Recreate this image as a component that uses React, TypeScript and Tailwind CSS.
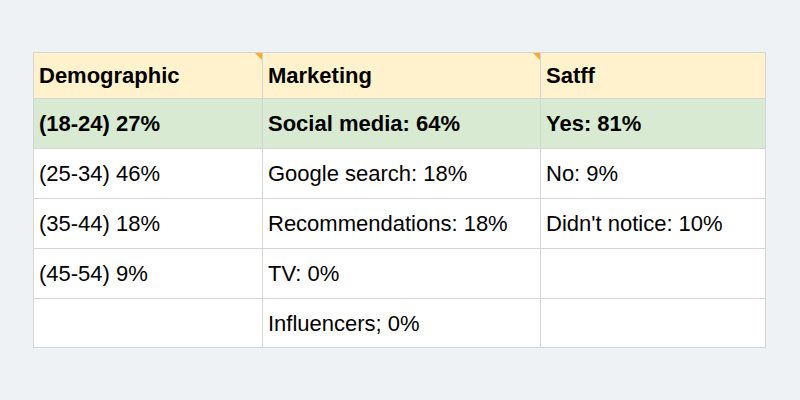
import React from "react";

interface Row {
  cells: string[];
  kind: "head" | "top" | "plain";
}

const rows: Row[] = [
  { kind: "head", cells: ["Demographic", "Marketing", "Satff"] },
  { kind: "top", cells: ["(18-24) 27%", "Social media: 64%", "Yes: 81%"] },
  { kind: "plain", cells: ["(25-34) 46%", "Google search: 18%", "No: 9%"] },
  { kind: "plain", cells: ["(35-44) 18%", "Recommendations: 18%", "Didn't notice: 10%"] },
  { kind: "plain", cells: ["(45-54) 9%", "TV: 0%", ""] },
  { kind: "plain", cells: ["", "Influencers; 0%", ""] },
];

const Corner = () => (
  <svg className="absolute top-0 right-0" width="7" height="7" viewBox="0 0 7 7">
    <polygon points="0,0 7,0 7,7" fill="#f5ab35" />
  </svg>
);

export default function App() {
  return (
    <div className="w-[800px] h-[400px] bg-[#eff2f5] pt-[52px] pl-[33px] font-['Liberation_Sans',Arial,sans-serif] text-[22px] text-[#000]">
      <div className="grid grid-cols-[229px_278px_225px] w-[733px] border-t border-l border-[#d5d5d5]">
        {rows.map((row, ri) =>
          row.cells.map((cell, ci) => {
            const bg =
              row.kind === "head" ? "bg-[#fff2cc] font-bold" : row.kind === "top" ? "bg-[#d9ead3] font-bold" : "bg-white";
            const h = row.kind === "head" ? "h-[46px]" : ri === rows.length - 1 ? "h-[49px]" : "h-[50px]";
            return (
              <div
                key={`${ri}-${ci}`}
                className={`relative flex items-center pl-[5px] border-r border-b border-[#d5d5d5] whitespace-nowrap ${bg} ${h}`}
              >
                {cell}
                {row.kind === "head" && ci < 2 && <Corner />}
              </div>
            );
          })
        )}
      </div>
    </div>
  );
}
